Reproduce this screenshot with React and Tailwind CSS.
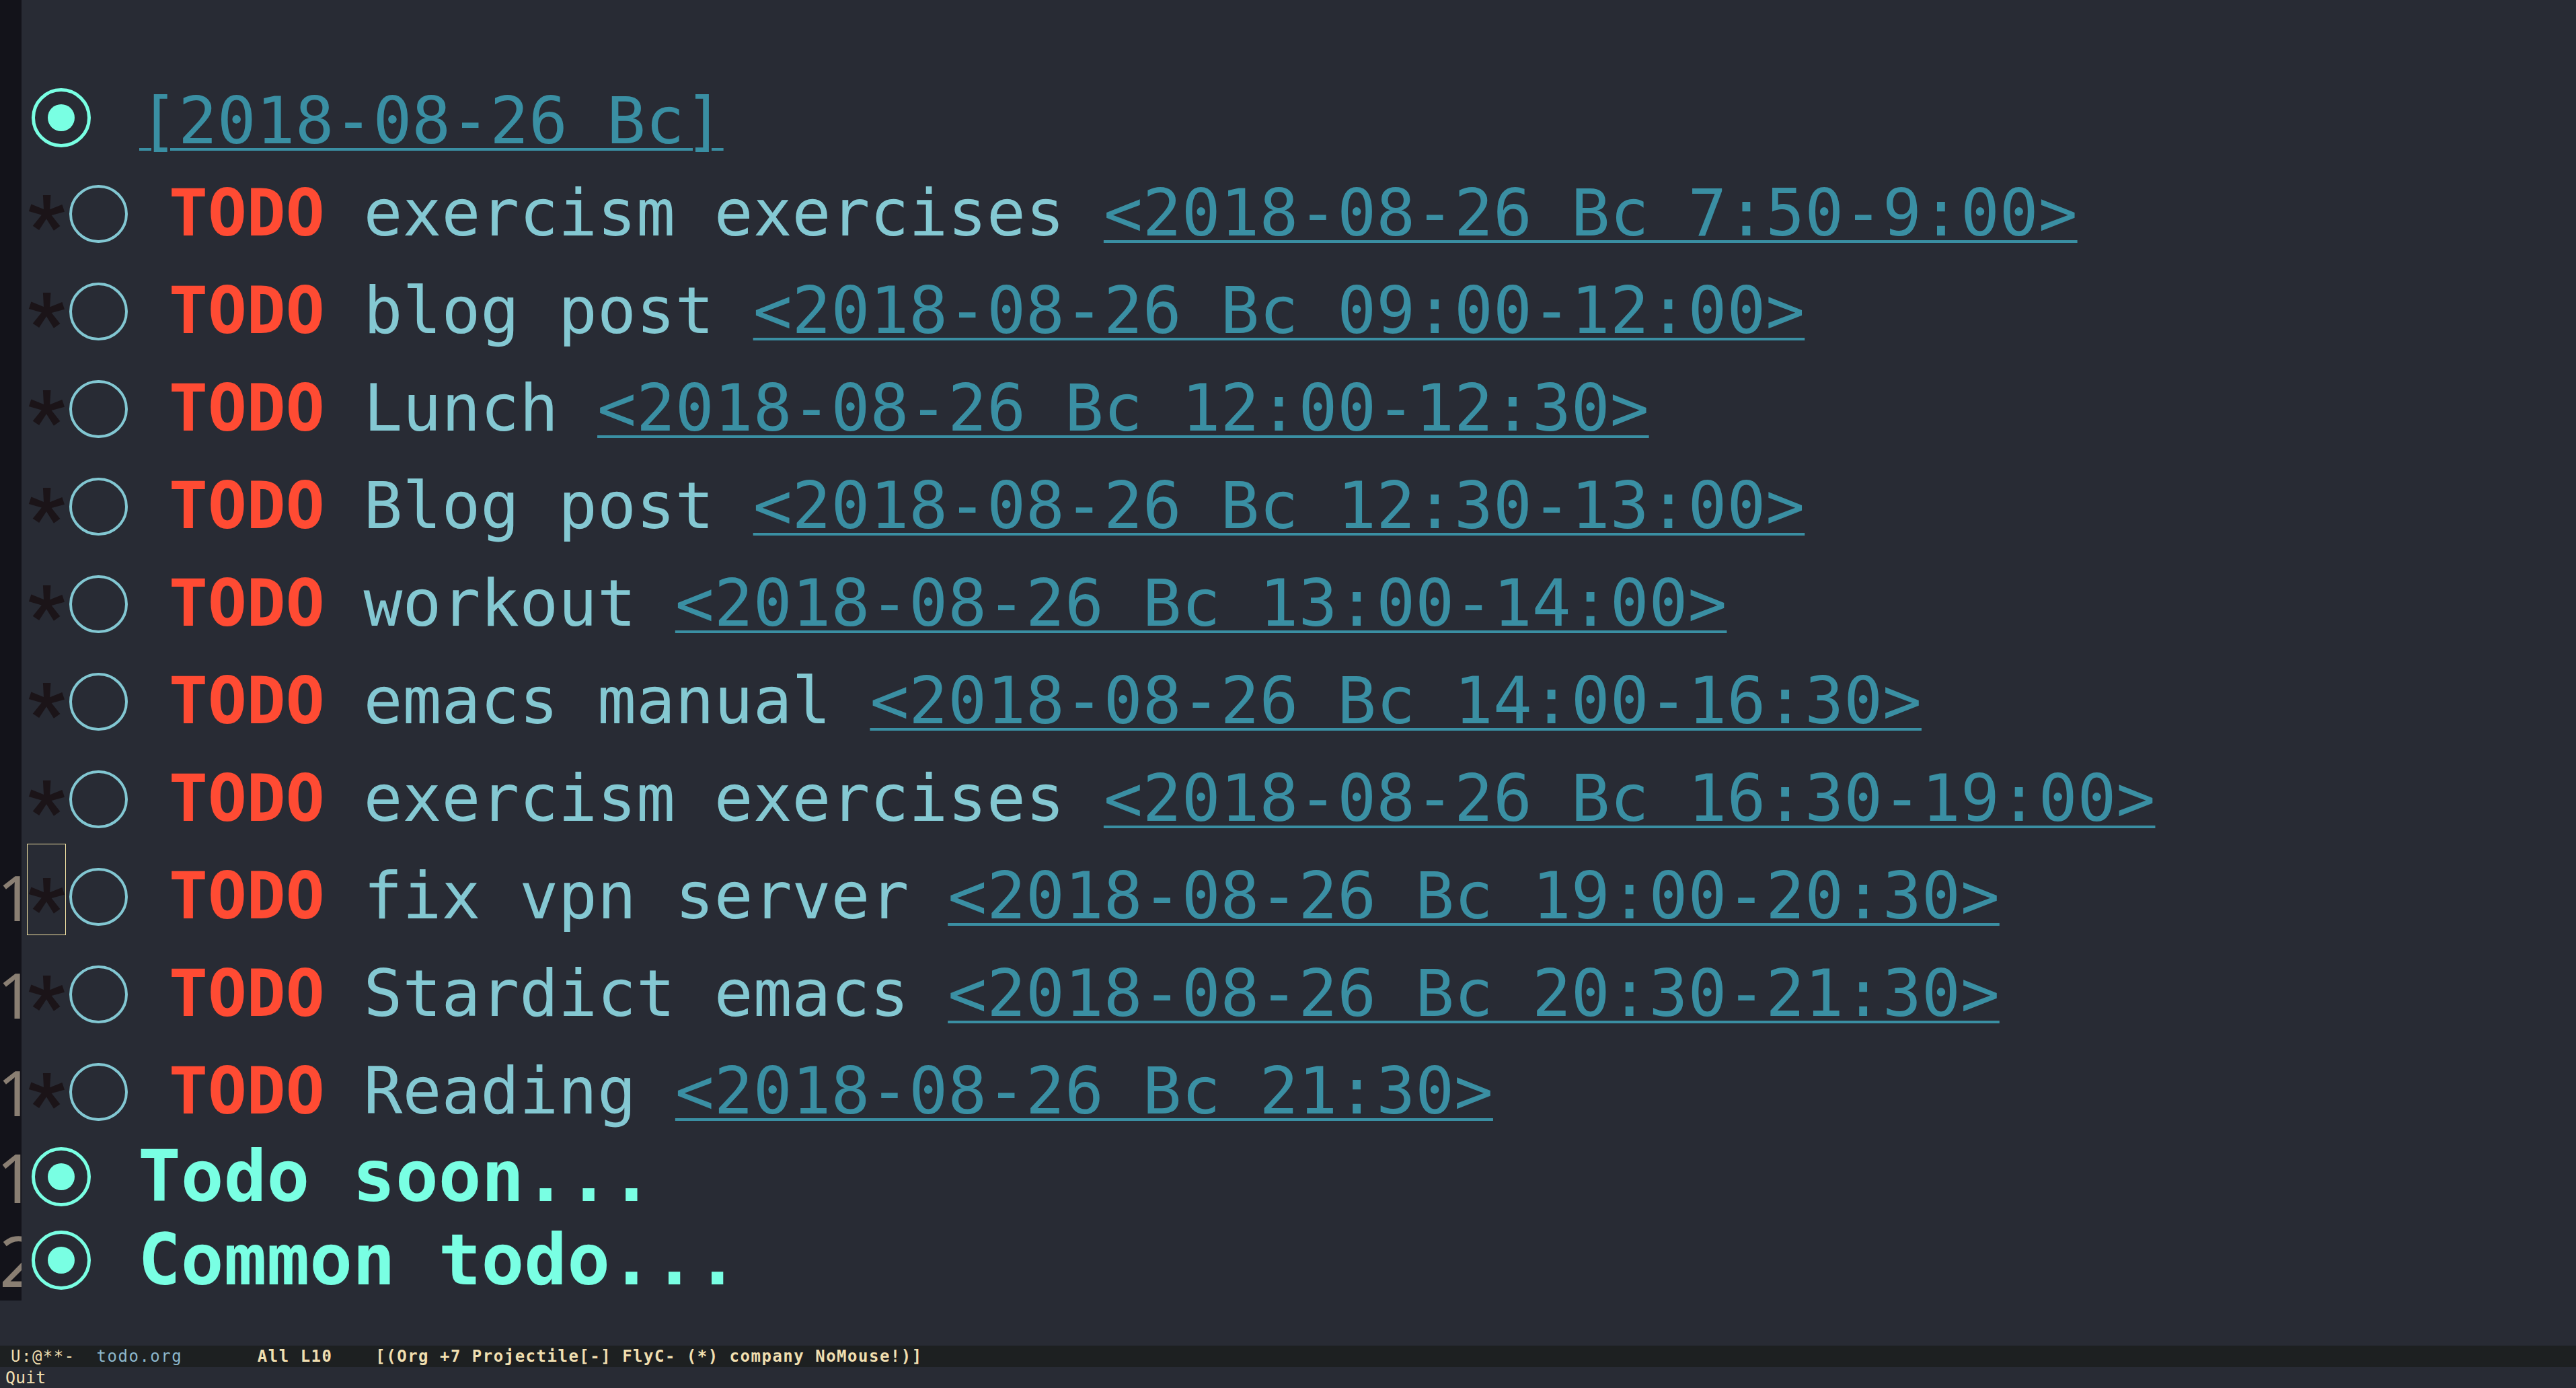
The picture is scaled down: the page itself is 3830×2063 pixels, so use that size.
import React from 'react';

const mono = "font-['DejaVu_Sans_Mono',monospace]";

const todos = [
  { title: 'exercism exercises', date: '<2018-08-26 Bc 7:50-9:00>' },
  { title: 'blog post', date: '<2018-08-26 Bc 09:00-12:00>' },
  { title: 'Lunch', date: '<2018-08-26 Bc 12:00-12:30>' },
  { title: 'Blog post', date: '<2018-08-26 Bc 12:30-13:00>' },
  { title: 'workout', date: '<2018-08-26 Bc 13:00-14:00>' },
  { title: 'emacs manual', date: '<2018-08-26 Bc 14:00-16:30>' },
  { title: 'exercism exercises', date: '<2018-08-26 Bc 16:30-19:00>' },
  { title: 'fix vpn server', date: '<2018-08-26 Bc 19:00-20:30>', cursor: true, num: true },
  { title: 'Stardict emacs', date: '<2018-08-26 Bc 20:30-21:30>', num: true },
  { title: 'Reading', date: '<2018-08-26 Bc 21:30>', num: true },
];

// left fringe / line-number column, mostly scrolled out of view
const Gutter = ({ children }) => (
  <div className="relative w-[32px] shrink-0 self-stretch overflow-hidden bg-[#13131a]">
    {children}
  </div>
);

const One = () => (
  <span className="absolute inset-y-0 -right-[18px] flex items-center font-['Noto_Sans',sans-serif] text-[94px] leading-none text-[#8a7f73]">
    1
  </span>
);

const BigBullet = ({ className = '' }) => (
  <div className={`ml-[15px] flex h-[88px] w-[88px] shrink-0 items-center justify-center rounded-full border-[5px] border-[#79ffe3] ${className}`}>
    <div className="h-[40px] w-[40px] rounded-full bg-[#79ffe3]" />
  </div>
);

const TodoRow = ({ title, date, cursor, num }) => (
  <div className="flex h-[145px] items-center">
    <Gutter>{num && <One />}</Gutter>
    <div className="relative ml-[8px] flex h-full w-[58px] shrink-0 items-center justify-center">
      {cursor && <div className="absolute left-0 -top-[6px] h-[136px] w-[58px] border border-[#f3e3a4]" />}
      <span className="translate-y-[18px] font-['Roboto',sans-serif] text-[122px] font-bold leading-none text-[#1b1418]">*</span>
    </div>
    <div className="ml-[5px] h-[86px] w-[87px] shrink-0 rounded-full border-[4px] border-[#82c7d2]" />
    <div className={`ml-[61px] whitespace-pre ${mono} text-[96.2px] leading-none`}>
      <span className="font-bold text-[#ff4b33]">TODO</span>
      <span className="text-[#84c8d2]"> {title} </span>
      <span className="text-[#3a8fa3] underline decoration-[4px] underline-offset-[7px]">{date}</span>
    </div>
  </div>
);

export default function App() {
  return (
    <div className="flex h-[2063px] w-full flex-col overflow-hidden bg-[#282b34]">
      <div className="flex h-[1938px] flex-col">
        <div className="flex h-[105px]">
          <Gutter />
        </div>

        <div className="flex h-[140px] items-center">
          <Gutter />
          <BigBullet />
          <div className={`ml-[72px] pt-[10px] whitespace-pre ${mono} text-[96.2px] leading-none text-[#3a8fa3] underline decoration-[4px] underline-offset-[7px]`}>
            [2018-08-26 Bc]
          </div>
        </div>

        {todos.map((t, i) => (
          <TodoRow key={i} {...t} />
        ))}

        <div className="flex h-[108px] items-center">
          <Gutter>
            <span className="absolute inset-y-0 -right-[20px] flex items-center font-['Noto_Sans',sans-serif] text-[100px] leading-none text-[#8a7f73]">
              1
            </span>
          </Gutter>
          <BigBullet />
          <div className={`ml-[70px] whitespace-pre ${mono} text-[106px] font-bold leading-none text-[#79ffe3]`}>
            Todo soon...
          </div>
        </div>

        <div className="flex h-[130px] items-center">
          <Gutter>
            <span className="absolute inset-y-0 -left-[1px] flex items-center pt-[9px] font-['Noto_Sans',sans-serif] text-[104px] leading-none text-[#8a7f73]">
              2
            </span>
          </Gutter>
          <BigBullet className="mt-[9px]" />
          <div className={`ml-[70px] mt-[9px] whitespace-pre ${mono} text-[106px] font-bold leading-none text-[#79ffe3]`}>
            Common todo...
          </div>
        </div>
      </div>

      <div className="h-[62px]" />

      <div className={`flex h-[32px] items-center bg-[#1d2021] pl-[16px] whitespace-pre ${mono} text-[24px] leading-none tracking-[1.5px] text-[#f0dfb0]`}>
        <span>U:@**-  </span>
        <span className="text-[#8cb7cc]">todo.org</span>
        <span>       </span>
        <span className="font-bold">All L10</span>
        <span>    </span>
        <span className="font-bold">[(Org +7 Projectile[-] FlyC- (*) company NoMouse!)]</span>
      </div>

      <div className={`flex h-[31px] items-center pl-[8px] ${mono} text-[25px] leading-none text-[#f0dfb0]`}>
        Quit
      </div>
    </div>
  );
}
